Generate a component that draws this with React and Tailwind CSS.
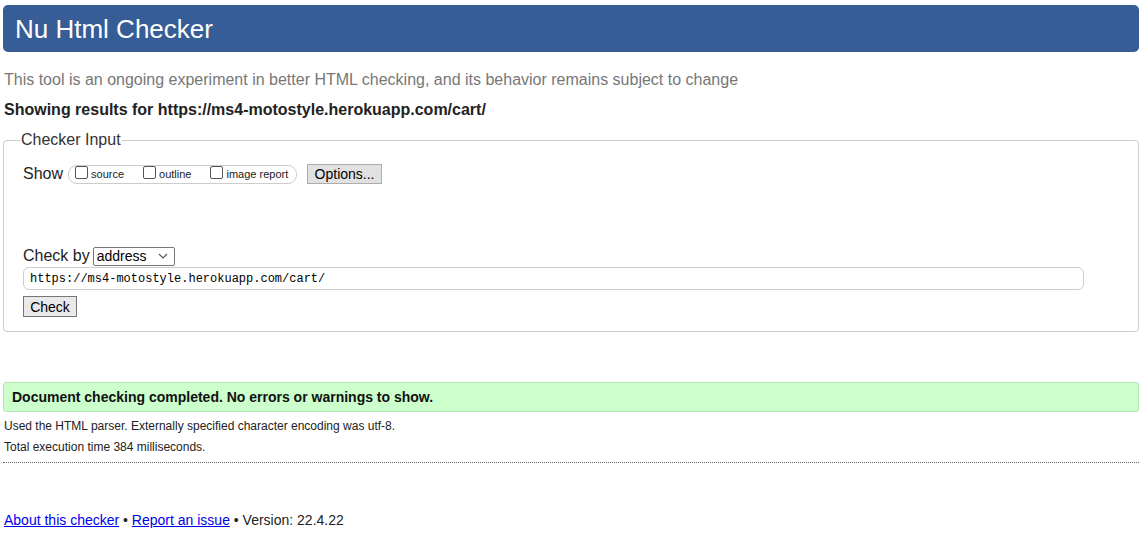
export default function App() {
  const font = { fontFamily: '"Liberation Sans", Arial, sans-serif' };
  return (
    <div className="bg-white w-[1142px] h-[537px] overflow-hidden text-black" style={font}>
      <div className="pt-[5px] px-[3px]">
        <div className="h-[47px] rounded-[5px] bg-[#365d95] flex items-center pl-[12px]">
          <h1 className="text-[26px] leading-[30px] text-white font-normal">Nu Html Checker</h1>
        </div>
      </div>
      <p className="mt-[19px] ml-[4px] text-[16px] leading-[18px] text-[#777]">
        This tool is an ongoing experiment in better HTML checking, and its behavior remains subject to change
      </p>
      <p className="mt-[12px] ml-[4px] text-[16px] leading-[18px] font-bold text-[#222]">
        Showing results for https://ms4-motostyle.herokuapp.com/cart/
      </p>
      <fieldset className="mt-[12px] mx-[3px] border border-[#ccc] rounded-[4px] h-[201px] pl-[19px] pr-[4px]">
        <legend className="-ml-[3px] px-[1px] text-[16px] leading-[18px] text-[#333]">Checker Input</legend>
        <div className="flex items-center mt-[15px] h-[20px]">
          <span className="text-[16px] leading-[18px] text-[#222] mr-[5px]">Show</span>
          <div className="h-[19px] w-[229px] border border-[#ccc] rounded-[9px] flex items-center pl-[6px]">
            <label className="flex items-center text-[11px] leading-[12px] text-[#222]">
              <span className="w-[13px] h-[13px] border border-[#555] rounded-[2px] bg-white mr-[3px] -mt-[3px]"></span>
              source
            </label>
            <label className="flex items-center text-[11px] leading-[12px] text-[#222] ml-[19px]">
              <span className="w-[13px] h-[13px] border border-[#555] rounded-[2px] bg-white mr-[3px] -mt-[3px]"></span>
              outline
            </label>
            <label className="flex items-center text-[11px] leading-[12px] text-[#222] ml-[19px]">
              <span className="w-[13px] h-[13px] border border-[#555] rounded-[2px] bg-white mr-[3px] -mt-[3px]"></span>
              image report
            </label>
          </div>
          <button className="ml-[10px] h-[20px] w-[75px] border border-[#adadad] bg-[#e1e1e1] text-[14px] leading-[16px] text-black">
            Options...
          </button>
        </div>
        <div className="flex items-center mt-[62px] h-[20px]">
          <span className="text-[16px] leading-[18px] text-[#222] mr-[3px]">Check by</span>
          <div className="h-[19px] w-[82px] border border-[#767676] rounded-[2px] bg-white flex items-center justify-between pl-[3px] pr-[6px]">
            <span className="text-[14px] leading-[16px] text-black">address</span>
            <svg width="10" height="6" viewBox="0 0 10 6" fill="none" stroke="#555" strokeWidth="1.2">
              <path d="M1 1l4 4 4-4" />
            </svg>
          </div>
        </div>
        <div className="mt-[1px] h-[23px] w-[1061px] border border-[#ccc] rounded-[6px] flex items-center pl-[6px]">
          <span className="text-[12px] leading-[14px] text-black" style={{ fontFamily: '"Liberation Mono", "DejaVu Sans Mono", monospace' }}>
            https://ms4-motostyle.herokuapp.com/cart/
          </span>
        </div>
        <button className="mt-[6px] h-[21px] w-[54px] border border-[#767676] bg-[#e9e9e9] text-[14px] leading-[16px] text-black block">
          Check
        </button>
      </fieldset>
      <div className="mt-[50px] mx-[3px] h-[30px] bg-[#ccffcc] border border-[#b5e5b5] rounded-[3px] flex items-center pl-[8px]">
        <span className="text-[14px] leading-[16px] font-bold text-[#111]">Document checking completed. No errors or warnings to show.</span>
      </div>
      <p className="mt-[7px] ml-[4px] text-[12px] leading-[14px] text-[#222]">
        Used the HTML parser. Externally specified character encoding was utf-8.
      </p>
      <p className="mt-[7px] ml-[4px] text-[12px] leading-[14px] text-[#222]">Total execution time 384 milliseconds.</p>
      <div className="mt-[8px] mx-[3px] border-t border-dotted border-[#666]"></div>
      <p className="mt-[49px] ml-[4px] text-[14px] leading-[16px] text-[#222]">
        <a className="text-[#0000ee] underline">About this checker</a> • <a className="text-[#0000ee] underline">Report an issue</a> • Version: 22.4.22
      </p>
    </div>
  );
}
